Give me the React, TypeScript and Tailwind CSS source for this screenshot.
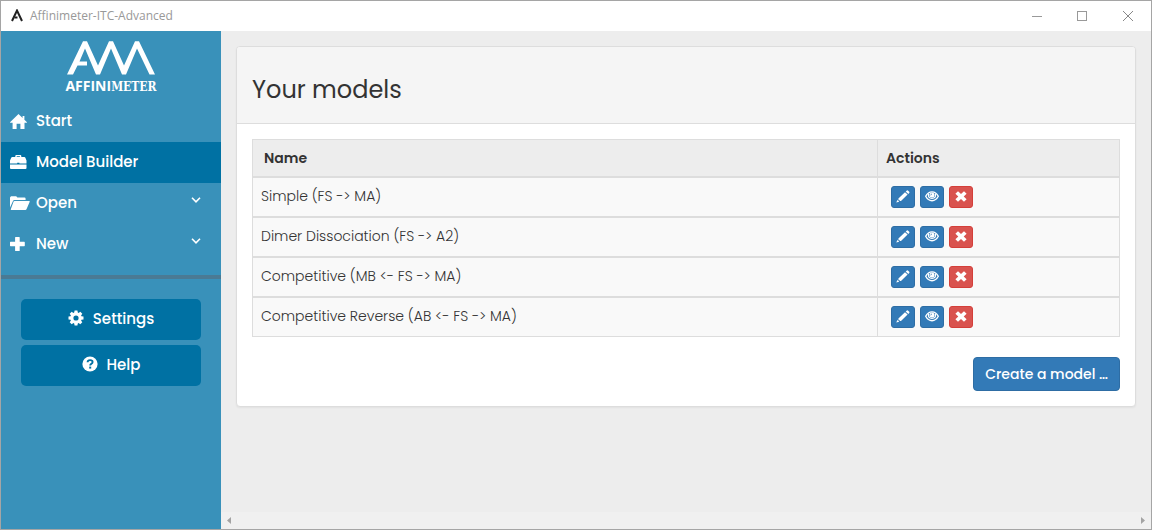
import type { ReactNode } from 'react';

const MODELS = [
  'Simple (FS -> MA)',
  'Dimer Dissociation (FS -> A2)',
  'Competitive (MB <- FS -> MA)',
  'Competitive Reverse (AB <- FS -> MA)',
];

const HomeIcon = () => (
  <svg viewBox="0 0 17 15" className="h-[15px] w-[17px]" fill="currentColor">
    <path d="M8.5 0 L12.6 3.9 L12.6 2 L14.4 2 L14.4 5.7 L17 8.2 Q17 8.7 16.3 8.7 L14.5 8.7 L14.5 15 L10.4 15 L10.4 9.8 L6.6 9.8 L6.6 15 L2.6 15 L2.6 8.7 L.7 8.7 Q0 8.7 0 8.2 Z" />
  </svg>
);

const BriefcaseIcon = () => (
  <svg viewBox="0 0 17 14" className="h-[14px] w-[17px]" fill="currentColor">
    <path d="M5.3 2 V1 Q5.3 0 6.3 0 H10.3 Q11.3 0 11.3 1 V2 H14.2 Q15.2 2 15.6 3.2 L16.5 5.6 V8.5 H9.4 V7.8 H7.2 V8.5 H0 V5.6 L1 3.2 Q1.4 2 2.4 2 Z M6.7 2 H9.9 V1.3 H6.7 Z" fillRule="evenodd" />
    <path d="M0 9.5 H16.5 V13 Q16.5 14 15.5 14 H1 Q0 14 0 13 Z" />
  </svg>
);

const FolderOpenIcon = () => (
  <svg viewBox="0 0 20 14" className="h-[14px] w-[20px]" fill="currentColor">
    <path d="M0 11.5 V1.6 L1 .2 H6.2 L7.4 1.6 H14.5 Q15.6 1.6 15.6 2.7 V4 H4.4 Q3.4 4 3 4.9 Z" />
    <path d="M4.5 4.9 H19.2 Q20 4.9 19.7 5.7 L16.6 13.1 Q16.2 14 15.3 14 H1.2 Q.5 14 .8 13.2 L3.6 5.6 Q3.9 4.9 4.5 4.9 Z" />
  </svg>
);

const PlusIcon = () => (
  <svg viewBox="0 0 15 14" className="h-[14px] w-[15px]" fill="currentColor">
    <path d="M5.6 0 H9.2 Q9.7 0 9.7 .5 V4.8 H14.2 Q14.8 4.8 14.8 5.4 V8.6 Q14.8 9.2 14.2 9.2 H9.7 V13.5 Q9.7 14 9.2 14 H5.6 Q5.1 14 5.1 13.5 V9.2 H.6 Q0 9.2 0 8.6 V5.4 Q0 4.8 .6 4.8 H5.1 V.5 Q5.1 0 5.6 0 Z" />
  </svg>
);

const CogIcon = () => (
  <svg viewBox="-8 -8 16 16" className="mb-[3px] size-4" fill="currentColor">
    <path
      fillRule="evenodd"
      d="M-1.4 -7.5 H1.4 L1.8 -5.4 L2.6 -5.1 L4.3 -6.3 L6.3 -4.3 L5.1 -2.6 L5.4 -1.8 L7.5 -1.4 V1.4 L5.4 1.8 L5.1 2.6 L6.3 4.3 L4.3 6.3 L2.6 5.1 L1.8 5.4 L1.4 7.5 H-1.4 L-1.8 5.4 L-2.6 5.1 L-4.3 6.3 L-6.3 4.3 L-5.1 2.6 L-5.4 1.8 L-7.5 1.4 V-1.4 L-5.4 -1.8 L-5.1 -2.6 L-6.3 -4.3 L-4.3 -6.3 L-2.6 -5.1 L-1.8 -5.4 Z M2.6 0 A2.6 2.6 0 1 0 -2.6 0 A2.6 2.6 0 1 0 2.6 0 Z"
    />
  </svg>
);

const HelpIcon = () => (
  <svg viewBox="0 0 16 16" className="mb-[3px] size-4">
    <circle cx="8" cy="8" r="7.6" fill="#fff" />
    <path d="M5.6 6.3 Q5.6 4.1 8.1 4.1 Q10.6 4.1 10.6 6 Q10.6 7.2 9.3 7.8 Q8.2 8.3 8.2 9.6" fill="none" stroke="#0071a3" strokeWidth="1.9" />
    <rect x="7.2" y="10.6" width="2" height="2" fill="#0071a3" />
  </svg>
);

const ChevronIcon = () => (
  <svg viewBox="0 0 10 6" className="mb-2 ml-auto h-[6px] w-[10px]" fill="none" stroke="currentColor" strokeWidth="1.6">
    <path d="M1 .8 L5 4.8 L9 .8" />
  </svg>
);

const PencilIcon = () => (
  <svg viewBox="0 0 14 13" className="h-[13px] w-[14px]" fill="currentColor">
    <path d="M10.6 .7 Q11.2 .1 11.9 .6 L13.2 1.8 Q13.8 2.4 13.2 3 L12.3 3.9 L9.7 1.6 Z M9 2.3 L11.6 4.6 L5 11 L3.7 10.9 L3.6 9.9 L2.4 9.7 L2.4 8.6 Z M1.6 9.5 L1.7 10.5 L2.8 10.7 L3 11.7 L.3 12.5 Z" />
  </svg>
);

const EyeIcon = () => (
  <svg viewBox="0 0 14 11" className="h-[11px] w-[14px]" fill="none" stroke="currentColor">
    <path d="M.7 5.3 Q3 .9 7 .9 Q11 .9 13.3 5.3 Q11 9.7 7 9.7 Q3 9.7 .7 5.3 Z" strokeWidth="1.4" />
    <path d="M3.6 2.6 Q2.6 7.4 7 7.4 Q11.4 7.4 10.4 2.6" strokeWidth="1.2" />
    <circle cx="7" cy="4" r="2.5" fill="currentColor" stroke="none" />
    <path d="M5.7 4.4 Q5.7 3.1 7 3" stroke="#337ab7" strokeWidth=".7" />
  </svg>
);

const RemoveIcon = () => (
  <svg viewBox="0 0 12 11" className="h-[11px] w-[12px]" fill="currentColor">
    <path d="M3 .3 L6 3 L9 .3 L11.6 2.7 L8.7 5.5 L11.6 8.3 L9 10.7 L6 8 L3 10.7 L.4 8.3 L3.3 5.5 L.4 2.7 Z" />
  </svg>
);

const Logo = () => (
  <div className="flex flex-col items-center pt-[9px] text-white">
    <svg viewBox="0 0 88 36" className="h-[36px] w-[88px]" fill="currentColor">
      <path d="M0 34.5 L16 1.2 H20 L31 25.5 L42 1.2 H46 L57 25.5 L68 1.2 H72 L88 34.5 H82.5 L70 8.5 L59 34.5 H55 L44 8.5 L33 34.5 H29 L18 8.5 L12.5 21.5 H20 V25.5 H10.5 L6 34.5 Z" />
    </svg>
    <p className="flex items-baseline pt-px leading-[18px]">
      <span className="font-['Open_Sans',sans-serif] text-[14px] font-bold">AFFINI</span>
      <span className="font-['DejaVu_Serif_Condensed','DejaVu_Serif',serif] text-[12px] font-bold">METER</span>
    </p>
  </div>
);

type NavItemProps = { icon: ReactNode; label: string; active?: boolean; expandable?: boolean };

const NavItem = ({ icon, label, active, expandable }: NavItemProps) => (
  <li>
    <a
      href="#"
      aria-current={active ? 'page' : undefined}
      className={`flex h-[41px] items-center pr-5 pl-[9px] text-[15px] font-medium text-white ${active ? 'bg-[#0071a3]' : ''}`}
    >
      <span className="w-[26px] shrink-0 pb-px">{icon}</span>
      {label}
      {expandable && <ChevronIcon />}
    </a>
  </li>
);

const SideButton = ({ icon, label }: { icon: ReactNode; label: string }) => (
  <button
    type="button"
    className="flex h-[41px] w-full items-center justify-center gap-[9px] rounded-[5px] bg-[#0071a3] text-[15px] font-medium text-white"
  >
    {icon}
    {label}
  </button>
);

const ActionButton = ({ label, danger, children }: { label: string; danger?: boolean; children: ReactNode }) => (
  <button
    type="button"
    aria-label={label}
    className={`flex h-[22px] w-6 items-center justify-center rounded-[3px] border pb-px text-white ${
      danger ? 'border-[#d43f3a] bg-[#d9534f]' : 'border-[#2e6da4] bg-[#337ab7]'
    }`}
  >
    {children}
  </button>
);

const TitleBar = () => (
  <header className="flex h-[30px] shrink-0 items-center bg-white pl-[9px] text-[#999]">
    <svg viewBox="0 0 14 14" className="size-[14px]" fill="none" stroke="#222" strokeWidth="2">
      <path d="M2 12 L7 1.5 L12 12" />
      <path d="M4.5 8.5 H7.5" />
    </svg>
    <h1 className="ml-[6px] font-['Open_Sans',sans-serif] text-[12px]">Affinimeter-ITC-Advanced</h1>
    <div className="ml-auto flex">
      <button type="button" aria-label="Minimize" className="flex h-[30px] w-[45px] items-center justify-center">
        <span className="h-px w-[10px] bg-[#999]" />
      </button>
      <button type="button" aria-label="Maximize" className="flex h-[30px] w-[46px] items-center justify-center">
        <span className="size-[10px] border border-[#999]" />
      </button>
      <button type="button" aria-label="Close" className="flex h-[30px] w-[46px] items-center justify-center">
        <svg viewBox="0 0 10 10" className="size-[10px]" stroke="#888" strokeWidth="1">
          <path d="M0 0 L10 10 M10 0 L0 10" />
        </svg>
      </button>
    </div>
  </header>
);

const ModelTable = () => (
  <table className="w-full table-fixed border-separate border-spacing-0 border border-[#ddd] text-left text-[14px] leading-5">
    <thead>
      <tr className="h-[38px] bg-[#ededed]">
        <th className="border-r border-b-2 border-[#ddd] px-[11px] py-0 font-semibold">Name</th>
        <th className="w-[241px] border-b-2 border-[#ddd] px-2 py-0 font-semibold">Actions</th>
      </tr>
    </thead>
    <tbody className="bg-[#f9f9f9] [&>tr:last-child]:h-[38px] [&>tr:last-child>td]:border-b-0">
      {MODELS.map((model) => (
        <tr key={model} className="h-10">
          <td className="border-r border-b-2 border-[#ddd] px-2 pt-0 pb-[2px] font-light">{model}</td>
          <td className="border-b-2 border-[#ddd] px-[13px] py-0">
            <div className="flex gap-[5px]">
              <ActionButton label={`Edit ${model}`}>
                <PencilIcon />
              </ActionButton>
              <ActionButton label={`View ${model}`}>
                <EyeIcon />
              </ActionButton>
              <ActionButton label={`Delete ${model}`} danger>
                <RemoveIcon />
              </ActionButton>
            </div>
          </td>
        </tr>
      ))}
    </tbody>
  </table>
);

export default function App() {
  return (
    <div className="flex min-h-screen flex-col border border-[#a5a5a5] bg-[#ededed] font-['Poppins','Inter',sans-serif] text-[#333]">
      <TitleBar />
      <div className="flex grow">
        <aside className="w-[220px] shrink-0 bg-[#3991ba]">
          <Logo />
          <nav className="mt-[5px] border-b-4 border-[#4a7a94] pb-[10px]">
            <ul>
              <NavItem icon={<HomeIcon />} label="Start" />
              <NavItem icon={<BriefcaseIcon />} label="Model Builder" active />
              <NavItem icon={<FolderOpenIcon />} label="Open" expandable />
              <NavItem icon={<PlusIcon />} label="New" expandable />
            </ul>
          </nav>
          <div className="flex flex-col gap-[5px] p-5">
            <SideButton icon={<CogIcon />} label="Settings" />
            <SideButton icon={<HelpIcon />} label="Help" />
          </div>
        </aside>

        <div className="flex min-w-0 grow flex-col">
          <main className="grow p-[15px]">
            <section className="rounded-[4px] border border-[#ddd] bg-white shadow-xs">
              <div className="rounded-t-[3px] border-b border-[#ddd] bg-[#f5f5f5] px-[15px] pt-[29px] pb-[19px]">
                <h2 className="text-[24px] leading-7">Your models</h2>
              </div>
              <div className="p-[15px]">
                <ModelTable />
                <div className="mt-5 flex justify-end">
                  <button
                    type="button"
                    className="h-[34px] rounded-[4px] border border-[#2e6da4] bg-[#337ab7] px-[11px] text-[14px] font-medium text-white"
                  >
                    Create a model …
                  </button>
                </div>
              </div>
            </section>
          </main>
          <div className="flex h-[17px] items-center justify-between bg-[#f0f0f0] px-[6px]">
            <svg viewBox="0 0 4 7" className="h-[7px] w-1" fill="#a3a3a3">
              <path d="M4 0 V7 L0 3.5 Z" />
            </svg>
            <svg viewBox="0 0 4 7" className="h-[7px] w-1" fill="#a3a3a3">
              <path d="M0 0 V7 L4 3.5 Z" />
            </svg>
          </div>
        </div>
      </div>
    </div>
  );
}
